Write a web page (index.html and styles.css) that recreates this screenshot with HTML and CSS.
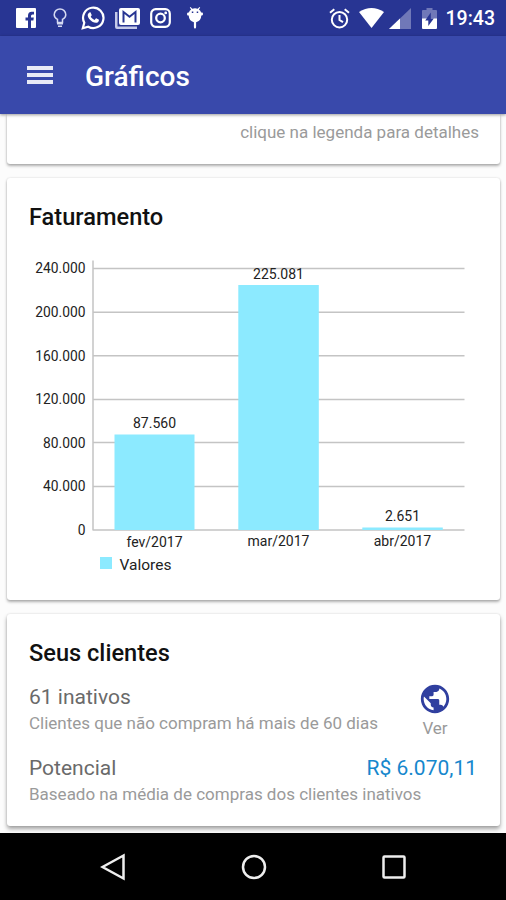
FILE: index.html
```html
<!DOCTYPE html>
<html lang="pt-BR">

<head>
    <meta charset="UTF-8">
    <meta name="viewport" content="width=device-width, initial-scale=1.0">
    <title>Gráficos</title>
    <link rel="stylesheet" href="styles.css">
</head>

<body>
    <div class="status-bar">
        <div class="notifications">
            <svg width="20" height="20" viewBox="0 0 20 20"><path fill="#fff" fill-rule="evenodd" d="M1 0h18q1 0 1 1v18q0 1-1 1h-4v-7.500h2.400l.4-3H15V8q0-1.500 1.500-1.500H18V3.700h-2.300Q12 3.700 12 7.500v2H9.500v3H12V20H1q-1 0-1-1V1q0-1 1-1z"/></svg>
            <svg class="bulb" width="14" height="20" viewBox="0 0 14 20"><path fill="none" stroke="#d5d9f2" stroke-width="1.500" d="M4.500 14.500v-3.200C2.500 10.300 1.200 9 1.200 6.700a5.800 5.800 0 0 1 11.600 0c0 2.300-1.300 3.600-3.300 4.600v3.200z"/><path fill="#d5d9f2" d="M4 14h6v2.500H4zM5 17.500h4V19H5z"/></svg>
            <svg class="whats" width="24" height="24" viewBox="0 0 24 24"><path fill="none" stroke="#fff" stroke-width="2.200" d="M1.800 22.200l1.500-5.500A10.200 10.200 0 1 1 7.200 20.700z"/><path fill="#fff" d="M8.500 6.500c.5-.3 1-.2 1.200.2l1 2.200c.1.500-.6 1.200-1 1.600.9 1.700 2.100 2.700 3.900 3.500l1.200-1.400c.2-.3.500-.3.800-.1l2.100 1c.4.300.3 2-.8 2.800-1.400 1-3.500.6-5.600-.6-2.500-1.500-4.600-4.100-4.600-6.400 0-1.200.8-2.300 1.800-2.800z"/></svg>
            <svg class="mail" width="25" height="21" viewBox="0 0 25 21"><path fill="#c5cae9" d="M0 4h2.500v14.500H22V21H2q-2 0-2-2z"/><path fill="#fff" fill-rule="evenodd" d="M6 0h17q2 0 2 2v13q0 2-2 2H6q-2 0-2-2V2q0-2 2-2zM7.500 2v12.500h2V6l5 4 5-4v8.500h2V2L14.500 7.500z"/></svg>
            <svg class="insta" width="21" height="20" viewBox="0 0 21 20"><rect x="1.200" y="1.200" width="18.600" height="17.600" rx="4.500" fill="none" stroke="#fff" stroke-width="2.200"/><circle cx="10.500" cy="10" r="4.300" fill="none" stroke="#fff" stroke-width="2.300"/><circle cx="15.700" cy="4.900" r="1.400" fill="#fff"/></svg>
            <svg class="robot" width="16" height="22" viewBox="0 0 16 22"><path fill="#fff" fill-rule="evenodd" d="M3.500 0l1.800 1.800a7 7 0 0 1 5.400 0L12.500 0l.7.600-1.300 2q1.700 1.200 2.200 3H15q1 0 1 1.400T15 8.600h-.7q-.3 5.600-5.200 6.700V20q0 1.500-1.100 1.500T6.900 20v-4.700Q2 14.200 1.700 8.600H1Q0 8.600 0 7.100t1-1.500h.9q.5-1.800 2.200-3l-1.300-2zM4.800 4.500V6h1.500V4.500zM9.700 4.500V6h1.500V4.500z"/></svg>
        </div>
        <div class="system">
            <svg width="21" height="21" viewBox="0 0 21 21"><g fill="none" stroke="#fff" stroke-width="2"><circle cx="10.500" cy="11.700" r="7.700"/><path d="M10.500 7v5l3.500 2.200M1 4.700L5.300 1.200M20 4.700l-4.300-3.500"/></g></svg>
            <svg class="wifi" width="25" height="20" viewBox="0 0 25 20"><path fill="#fff" d="M0 4Q12.500-4 25 4L12.500 20z"/></svg>
            <svg class="signal" width="22" height="21" viewBox="0 0 22 21"><path fill="#7078b8" d="M22 0v21H0z"/><path fill="#fff" d="M11 10.500V21H0z"/></svg>
            <svg class="battery" width="15" height="21" viewBox="0 0 15 21"><path fill="#7078b8" d="M4.500 0h6v2H14q1 0 1 1v8H0V3q0-1 1-1h3.500z"/><path fill="#fff" d="M0 10.500h15V20q0 1-1 1H1q-1 0-1-1z"/><path fill="#283593" d="M8.800 4.500v6h3L6.300 18v-5.500H3.200z"/></svg>
            <span class="clock">19:43</span>
        </div>
    </div>

    <header class="app-bar">
        <div class="menu"><span></span><span></span><span></span></div>
        <h1>Gráficos</h1>
    </header>

    <main class="content">
        <section class="card card-legend">
            <p>clique na legenda para detalhes</p>
        </section>

        <section class="card card-chart">
            <h2>Faturamento</h2>
            <svg class="chart" width="493" height="340" viewBox="0 0 493 340">
                <g class="grid">
                    <path d="M86 20.500H457.500M86 64.200H457.500M86 107.800H457.500M86 151.500H457.500M86 194.500H457.500M86 238.500H457.500M86 282H457.500M86 12.500V282.500"/>
                </g>
                <g class="bars">
                    <rect x="107.500" y="186.500" width="80" height="95.500"/>
                    <rect x="231.300" y="37" width="80.500" height="245"/>
                    <rect x="355.300" y="279.500" width="80.500" height="2.500"/>
                </g>
                <g class="scale">
                    <text x="78.500" y="25">240.000</text>
                    <text x="78.500" y="68.500">200.000</text>
                    <text x="78.500" y="112.500">160.000</text>
                    <text x="78.500" y="156">120.000</text>
                    <text x="78.500" y="199.500">80.000</text>
                    <text x="78.500" y="243">40.000</text>
                    <text x="78.500" y="286.500">0</text>
                </g>
                <g class="labels">
                    <text x="147.500" y="180">87.560</text>
                    <text x="271.500" y="30.500">225.081</text>
                    <text x="395.500" y="273">2.651</text>
                    <text x="147.500" y="299">fev/2017</text>
                    <text x="271.500" y="298">mar/2017</text>
                    <text x="395.500" y="298">abr/2017</text>
                </g>
                <rect class="key" x="93" y="309" width="12" height="12"/>
                <text class="key-text" x="112.500" y="321.500">Valores</text>
            </svg>
        </section>

        <section class="card card-clients">
            <h2>Seus clientes</h2>
            <div class="row">
                <div class="info">
                    <h3>61 inativos</h3>
                    <p>Clientes que não compram há mais de 60 dias</p>
                </div>
                <div class="see">
                    <svg width="34" height="34" viewBox="0 0 24 24"><path fill="#303f9f" d="M12 2C6.480 2 2 6.480 2 12s4.480 10 10 10 10-4.480 10-10S17.520 2 12 2zm-1 17.930c-3.950-.49-7-3.850-7-7.930 0-.62.080-1.210.21-1.790L9 15v1c0 1.100.9 2 2 2v1.930zm6.900-2.540c-.26-.81-1-1.390-1.900-1.390h-1v-3c0-.55-.45-1-1-1H8v-2h2c.55 0 1-.45 1-1V7h2c1.100 0 2-.9 2-2v-.41c2.930 1.190 5 4.060 5 7.410 0 2.080-.8 3.970-2.100 5.390z"/></svg>
                    <span>Ver</span>
                </div>
            </div>
            <div class="row row-potential">
                <div class="info">
                    <h3>Potencial</h3>
                    <p>Baseado na média de compras dos clientes inativos</p>
                </div>
                <strong class="price">R$ 6.070,11</strong>
            </div>
        </section>
    </main>

    <nav class="nav-bar">
        <svg width="26" height="28" viewBox="0 0 26 28"><path d="M23.500 2.500v23L2.500 14z"/></svg>
        <svg width="28" height="28" viewBox="0 0 28 28"><circle cx="14" cy="14" r="11"/></svg>
        <svg width="26" height="26" viewBox="0 0 26 26"><rect x="2.500" y="2.500" width="21" height="21" rx="1"/></svg>
    </nav>
</body>

</html>
```
FILE: styles.css
```css
* {
    margin: 0;
    padding: 0;
    box-sizing: border-box;
}

body {
    width: 506px;
    height: 900px;
    overflow: hidden;
    display: flex;
    flex-direction: column;
    font-family: Roboto, "Liberation Sans", sans-serif;
    background-color: #fcfcfc;
}

svg {
    display: block;
    flex-shrink: 0;
}

/* status bar */
.status-bar {
    height: 36px;
    flex-shrink: 0;
    padding: 0 11px 0 16px;
    display: flex;
    justify-content: space-between;
    align-items: center;
    background-color: #283593;
}

.notifications,
.system {
    display: flex;
    align-items: center;
}

.bulb {
    margin-left: 17px;
}

.whats {
    margin-left: 14px;
}

.mail {
    margin-left: 10px;
}

.insta {
    margin-left: 10px;
}

.robot {
    margin-left: 16px;
}

.wifi {
    margin-left: 9px;
}

.signal {
    margin-left: 5px;
}

.battery {
    margin-left: 11px;
}

.clock {
    margin-left: 9px;
    font-size: 19.5px;
    font-weight: 500;
    line-height: 36px;
    padding-top: 1px;
    color: #fff;
}

/* app bar */
.app-bar {
    height: 78px;
    flex-shrink: 0;
    padding-left: 27px;
    display: flex;
    align-items: center;
    position: relative;
    background-color: #3949ab;
    box-shadow: 0 1px 3px rgba(0, 0, 0, .4);
}

.menu {
    width: 26px;
    display: flex;
    flex-direction: column;
    gap: 3px;
}

.menu span {
    height: 4px;
    background-color: #e8eaf6;
}

.app-bar h1 {
    margin: 2px 0 0 32px;
    font-size: 28px;
    font-weight: 500;
    color: #fff;
}

/* cards */
.content {
    flex: 1;
    min-height: 0;
    overflow: hidden;
    padding: 0 6px 0 7px;
}

.card {
    border-radius: 3px;
    background-color: #fff;
    box-shadow: 0 2px 3px rgba(0, 0, 0, .3), 0 0 2px rgba(0, 0, 0, .15);
}

.card h2 {
    font-size: 23.6px;
    font-weight: 500;
    line-height: 28px;
    color: #111;
}

.card-legend {
    height: 50px;
    padding: 8px 21px 0 0;
    border-radius: 0 0 3px 3px;
    text-align: right;
}

.card p,
.card-clients .see span {
    font-size: 17px;
    line-height: 20px;
    color: #9a9a9a;
}

.card-chart {
    height: 422px;
    margin-top: 14px;
    padding-top: 25px;
}

.card-chart h2 {
    padding-left: 22px;
}

.chart {
    margin-top: 17px;
}

.grid path {
    fill: none;
    stroke: #c4c4c4;
    stroke-width: 1.5;
}

.bars rect,
.key {
    fill: #8ceaff;
}

.chart text {
    font-size: 14px;
    fill: #222;
}

.chart .scale text {
    font-size: 13.8px;
    text-anchor: end;
}

.labels text {
    text-anchor: middle;
}

.chart .key-text {
    font-size: 15.5px;
}

.card-clients {
    height: 212px;
    margin-top: 14px;
    padding: 25px 23px 0 22px;
    box-shadow: 0 3px 4px rgba(0, 0, 0, .35), 0 0 2px rgba(0, 0, 0, .15);
}

.row {
    display: flex;
    justify-content: space-between;
}

.card-clients .info {
    padding-top: 17px;
    white-space: nowrap;
}

.card-clients h3 {
    font-size: 21px;
    font-weight: 400;
    line-height: 26px;
    color: #6a6a6a;
}

.card-clients .info p {
    margin-top: 3px;
}

.card-clients .see {
    width: 40px;
    margin-right: 22px;
    padding-top: 15px;
    display: flex;
    flex-direction: column;
    align-items: center;
}

.card-clients .see span {
    margin-top: 2px;
}

.row-potential {
    margin-top: 17px;
}

.row-potential .info {
    width: 0;
    padding-top: 0;
}

.price {
    font-size: 21px;
    font-weight: 400;
    line-height: 26px;
    color: #1687cd;
}

/* android navigation */
.nav-bar {
    height: 67px;
    flex-shrink: 0;
    padding: 0 99px 0 100px;
    display: flex;
    justify-content: space-between;
    align-items: center;
    background-color: #000;
}

.nav-bar svg {
    fill: none;
    stroke: #eee;
    stroke-width: 2.5;
}
```
